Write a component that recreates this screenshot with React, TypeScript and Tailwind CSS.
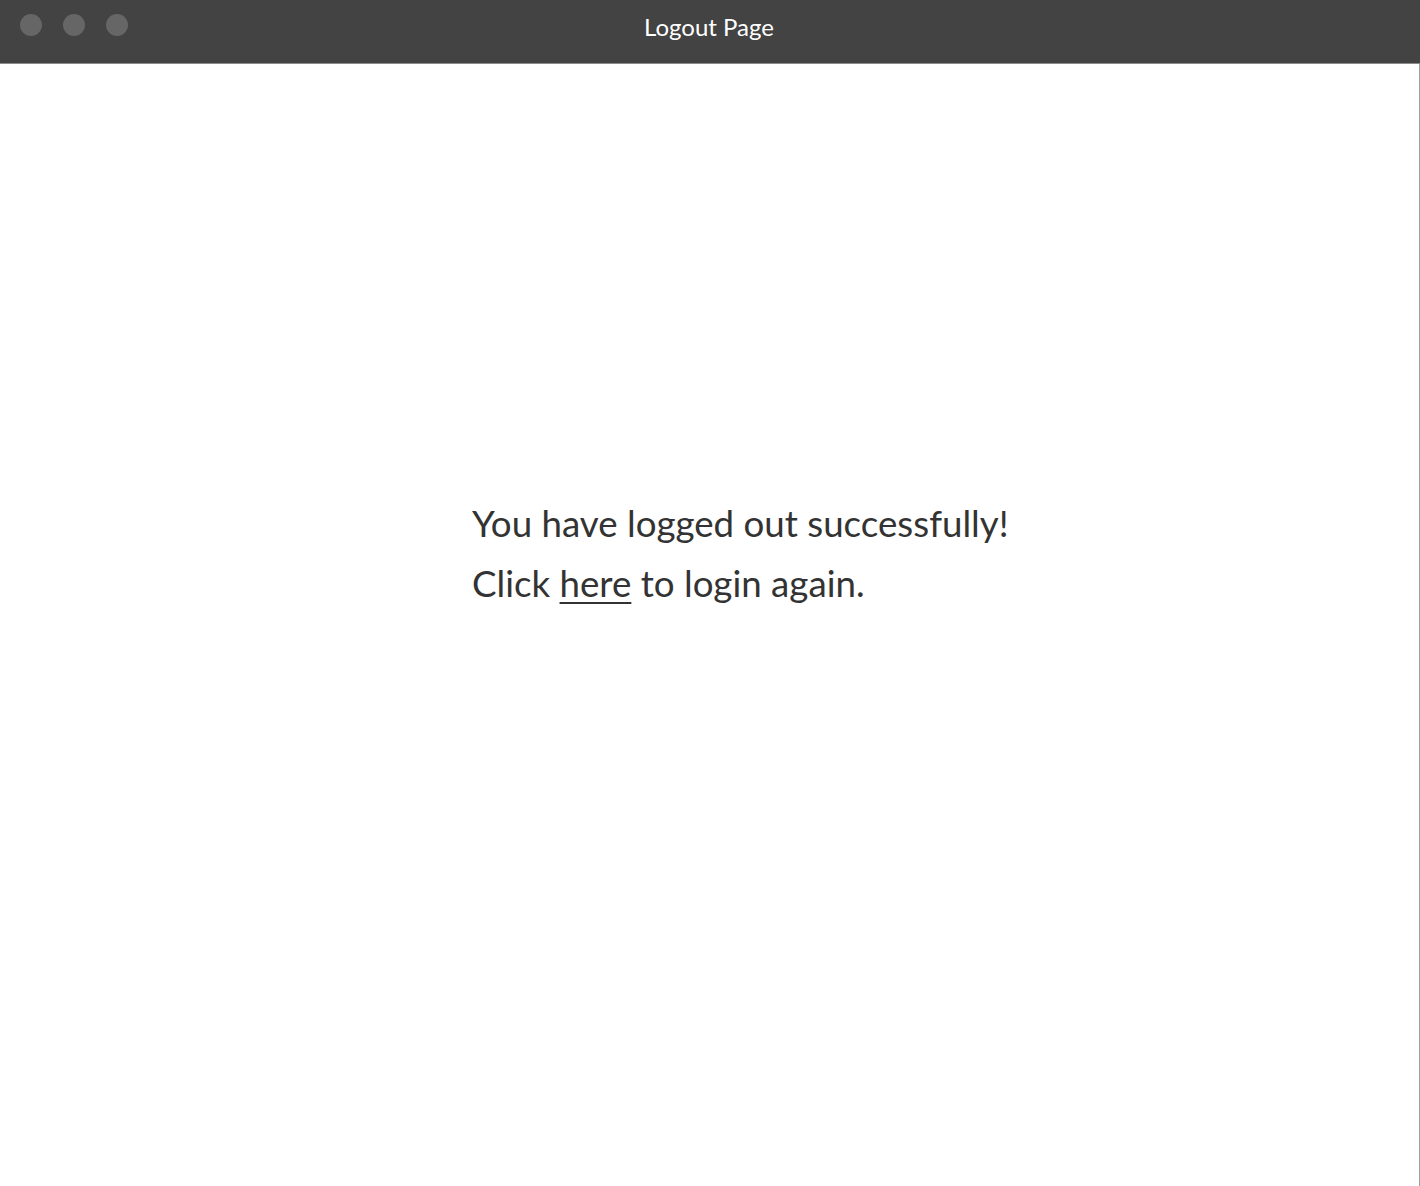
export default function App() {
  return (
    <div className="flex h-[1186px] w-[1420px] flex-col bg-white font-['Lato','Noto_Sans',sans-serif]">
      {/* Title bar */}
      <div className="relative flex h-[64px] shrink-0 items-center justify-center border-b border-[#8a8a8a] bg-[#434343]">
        <div className="absolute left-[20px] top-[14px] flex gap-[21px]">
          <span className="h-[22px] w-[22px] rounded-full bg-[#666666] blur-[0.6px]" />
          <span className="h-[22px] w-[22px] rounded-full bg-[#666666] blur-[0.6px]" />
          <span className="h-[22px] w-[22px] rounded-full bg-[#666666] blur-[0.6px]" />
        </div>
        <span className="-mt-[10px] -ml-[2px] text-[24px] text-white">Logout Page</span>
      </div>

      {/* Body */}
      <div className="flex-1 border-r border-[#a0a0a0] pl-[472px] pt-[429px]">
        <div className="text-[36.7px] leading-[60px] text-[#333333]">
          <p>You have logged out successfully!</p>
          <p>
            Click <a href="#" className="underline decoration-[2px] underline-offset-[5px]">here</a> to login again.
          </p>
        </div>
      </div>
    </div>
  );
}
